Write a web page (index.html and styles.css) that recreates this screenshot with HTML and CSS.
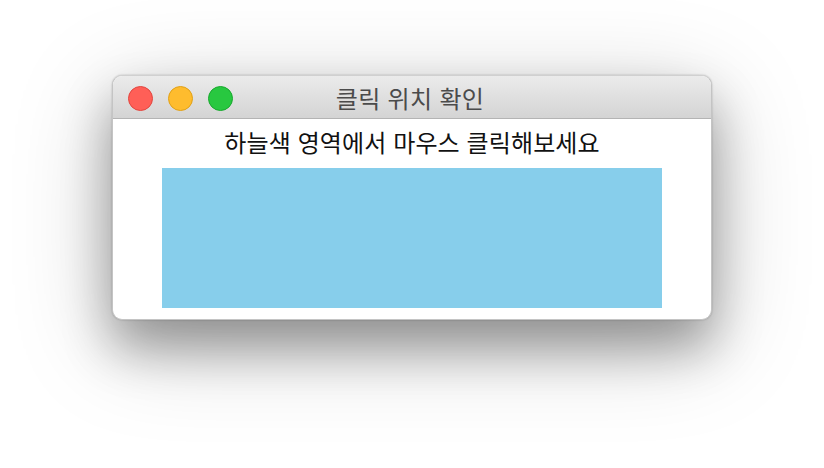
FILE: index.html
```html
<!DOCTYPE html>
<html lang="ko">
<head>
<meta charset="utf-8">
<title>클릭 위치 확인</title>
<link rel="stylesheet" href="styles.css">
</head>
<body>
  <div class="window">
    <div class="titlebar">
      <div class="lights">
        <span class="light red"></span>
        <span class="light yellow"></span>
        <span class="light green"></span>
      </div>
      <div class="title">클릭 위치 확인</div>
    </div>
    <div class="content">
      <div class="label">하늘색 영역에서 마우스 클릭해보세요</div>
      <div class="area"></div>
    </div>
  </div>
</body>
</html>
```
FILE: styles.css
```css
html, body {
  margin: 0;
  padding: 0;
  background: #ffffff;
}
html {
  height: 100%;
}
body {
  min-height: 468px;
  box-sizing: border-box;
  padding: 75px 0 0 112px;
  font-family: "Noto Sans CJK KR", "Noto Sans", sans-serif;
}
.window {
  width: 600px;
  height: 245px;
  box-sizing: border-box;
  border-radius: 10px;
  overflow: hidden;
  background: #ffffff;
  border: 1px solid #c4c4c4;
  border-top-color: #d0d0d0;
  box-shadow: 0 28px 50px rgba(0, 0, 0, 0.33), 0 22px 100px rgba(0, 0, 0, 0.22), 0 0 2px rgba(0,0,0,0.25);
  display: flex;
  flex-direction: column;
}
.titlebar {
  position: relative;
  height: 43px;
  box-sizing: border-box;
  background: linear-gradient(#ebebeb, #d4d4d4);
  border-bottom: 1px solid #b4b4b4;
  display: flex;
  align-items: center;
  justify-content: center;
  padding-top: 1px;
}
.lights {
  position: absolute;
  left: 15px;
  top: 10px;
  display: flex;
  gap: 15px;
}
.light {
  width: 25px;
  height: 25px;
  border-radius: 50%;
  box-sizing: border-box;
}
.red { background: #ff5f57; border: 1px solid #e2463f; }
.yellow { background: #febc2e; border: 1px solid #e1a116; }
.green { background: #28c840; border: 1px solid #17a92d; }
.title {
  font-size: 24px;
  color: #4b4b4b;
  letter-spacing: 0.3px;
  line-height: 30px;
  margin-left: -4px;
}
.content {
  flex: 1;
  display: flex;
  flex-direction: column;
  align-items: center;
  padding-top: 6px;
}
.label {
  font-size: 24px;
  line-height: 34px;
  color: #111111;
  letter-spacing: 0.1px;
}
.area {
  width: 500px;
  height: 140px;
  margin-top: 9px;
  background: #87ceeb;
}
```
